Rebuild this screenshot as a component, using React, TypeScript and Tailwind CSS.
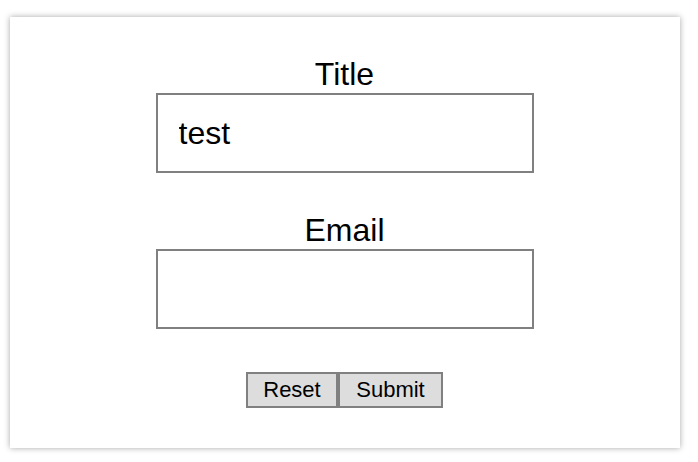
import React from 'react';

export default function App() {
  return (
    <div className="w-[698px] h-[462px] bg-white pt-[17px] pl-[10px] font-['Liberation_Sans',Arial,sans-serif] text-black">
      <div className="w-[670px] h-[431px] bg-white shadow-[0_0_6px_rgba(0,0,0,0.35)] flex flex-col items-center pt-[39px] pr-[1px]">
        <label className="text-[32px] leading-[37px]">Title</label>
        <input
          defaultValue="test"
          className="w-[378px] h-[80px] border-2 border-[#808080] px-[21px] text-[32px] outline-none"
        />
        <label className="text-[32px] leading-[37px] mt-[39px]">Email</label>
        <input className="w-[378px] h-[80px] border-2 border-[#808080] px-[21px] text-[32px] outline-none" />
        <div className="flex mt-[43px]">
          <button className="w-[92px] h-[36px] border-2 border-[#808080] bg-[#dddddd] text-[22px] leading-none">Reset</button>
          <button className="w-[105px] h-[36px] border-2 border-[#808080] bg-[#dddddd] text-[22px] leading-none">Submit</button>
        </div>
      </div>
    </div>
  );
}
